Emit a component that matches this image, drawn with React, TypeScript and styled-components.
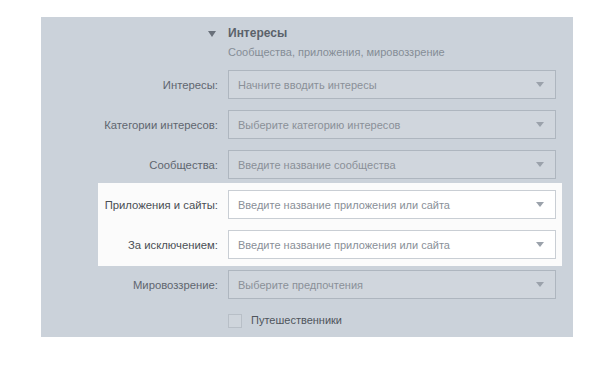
import styled, { createGlobalStyle } from 'styled-components';

const GlobalStyle = createGlobalStyle`
  body {
    margin: 0;
    background: #ffffff;
    font-family: 'Liberation Sans', Arial, sans-serif;
  }
`;

const Page = styled.div`
  padding: 17px 0 0 41px;
`;

const Panel = styled.section`
  width: 532px;
  height: 320px;
  box-sizing: border-box;
  background: #cbd2da;
  padding: 9px 17px 9px 0;
  display: flex;
  flex-direction: column;
`;

const Grid = styled.div`
  display: grid;
  grid-template-columns: 1fr 328px;
  column-gap: 10px;
  align-items: center;
`;

const Header = styled(Grid)`
  align-items: start;
`;

const Caret = styled.span`
  justify-self: end;
  margin: 5px 2px 0 0;
  width: 0;
  height: 0;
  border-left: 4px solid transparent;
  border-right: 4px solid transparent;
  border-top: 6px solid #69707a;
`;

const Title = styled.h2`
  margin: 0;
  font-size: 12px;
  line-height: 15px;
  font-weight: bold;
  color: #5b626a;
`;

const Subtitle = styled.div`
  margin-top: 4px;
  font-size: 11px;
  line-height: 15px;
  color: #858d96;
`;

const Form = styled.div`
  display: flex;
  flex-direction: column;
  gap: 11px;
  margin-top: 10px;
`;

const Highlight = styled.div`
  display: flex;
  flex-direction: column;
  gap: 11px;
  background: #fbfbfb;
  margin: -7px -6px -7px 57px;
  padding: 7px 6px 7px 0;
`;

const Label = styled.label<{ $strong?: boolean }>`
  justify-self: end;
  font-size: 11.3px;
  color: ${({ $strong }) => ($strong ? '#4a4f55' : '#5f666f')};
  white-space: nowrap;
`;

const Select = styled.div<{ $light?: boolean }>`
  height: 29px;
  box-sizing: border-box;
  display: flex;
  align-items: center;
  justify-content: space-between;
  padding: 0 11px 0 9px;
  border: 1px solid ${({ $light }) => ($light ? '#c9ced4' : '#aeb6bf')};
  background: ${({ $light }) => ($light ? '#ffffff' : '#d0d6dd')};
  font-size: 11px;
  color: #8a9098;
`;

const Arrow = styled.span`
  width: 0;
  height: 0;
  border-left: 4px solid transparent;
  border-right: 4px solid transparent;
  border-top: 5px solid #9ba2ab;
`;

const CheckRow = styled(Grid)`
  margin-top: 3px;
`;

const Check = styled.label`
  grid-column: 2;
  display: flex;
  align-items: center;
  gap: 9px;
  font-size: 11px;
  color: #4f555c;
  line-height: 15px;
`;

const Box = styled.span`
  width: 14px;
  height: 14px;
  box-sizing: border-box;
  border: 1px solid #b8bfc7;
  background: #cfd5dc;
`;

type Field = { label: string; placeholder: string };

const top: Field[] = [
  { label: 'Интересы:', placeholder: 'Начните вводить интересы' },
  { label: 'Категории интересов:', placeholder: 'Выберите категорию интересов' },
  { label: 'Сообщества:', placeholder: 'Введите название сообщества' },
];

const apps: Field[] = [
  { label: 'Приложения и сайты:', placeholder: 'Введите название приложения или сайта' },
  { label: 'За исключением:', placeholder: 'Введите название приложения или сайта' },
];

function Row({ field, light }: { field: Field; light?: boolean }) {
  return (
    <Grid>
      <Label $strong={light}>{field.label}</Label>
      <Select $light={light}>
        <span>{field.placeholder}</span>
        <Arrow />
      </Select>
    </Grid>
  );
}

export default function App() {
  return (
    <>
      <GlobalStyle />
      <Page>
        <Panel>
          <Header>
            <Caret />
            <div>
              <Title>Интересы</Title>
              <Subtitle>Сообщества, приложения, мировоззрение</Subtitle>
            </div>
          </Header>
          <Form>
            {top.map((f) => (
              <Row key={f.label} field={f} />
            ))}
            <Highlight>
              {apps.map((f) => (
                <Row key={f.label} field={f} light />
              ))}
            </Highlight>
            <Row field={{ label: 'Мировоззрение:', placeholder: 'Выберите предпочтения' }} />
            <CheckRow>
              <Check>
                <Box />
                Путешественники
              </Check>
            </CheckRow>
          </Form>
        </Panel>
      </Page>
    </>
  );
}
